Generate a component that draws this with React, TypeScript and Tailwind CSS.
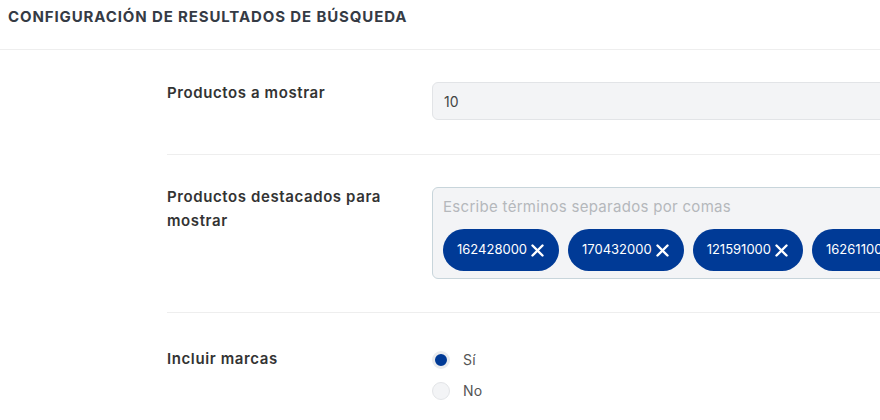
const tags = ["162428000", "170432000", "121591000", "162611000"];

function Radio({ checked, label }: { checked: boolean; label: string }) {
  return (
    <label className="flex items-center gap-[13px] h-[31px]">
      {checked ? (
        <span className="w-[18px] h-[18px] rounded-full border-[3px] border-[#e9ebee] bg-[#003a96]" />
      ) : (
        <span className="w-[18px] h-[18px] rounded-full border border-[#e3e5e8] bg-[#f3f4f6]" />
      )}
      <span className="text-[14px] text-[#555] tracking-[0.3px]">{label}</span>
    </label>
  );
}

function CloseIcon() {
  return (
    <svg width="13" height="13" viewBox="0 0 13 13" fill="none" stroke="white" strokeWidth="2.4" strokeLinecap="round">
      <path d="M1.5 1.5l10 10M11.5 1.5l-10 10" />
    </svg>
  );
}

export default function App() {
  return (
    <div className="w-[880px] h-[420px] overflow-hidden bg-white text-[#333] font-['Inter',sans-serif]">
      <div className="h-[50px] pt-[6px] pl-2 border-b border-[#eeeeee]">
        <h1 className="text-[15px] font-bold uppercase tracking-[0.88px] text-[#353b45]">
          Configuración de resultados de búsqueda
        </h1>
      </div>

      <div className="pl-[167px]">
        <div className="flex pt-[32px] pb-[34px] border-b border-[#eeeeee]">
          <div className="w-[265px] shrink-0 text-[15px] font-semibold leading-6 tracking-[0.6px] -mt-px">
            Productos a mostrar
          </div>
          <div className="w-[520px] shrink-0 h-[38px] rounded-md bg-[#f3f4f6] border border-[#e2e4e7] flex items-center pl-[11px] text-[14px] text-[#444]">
            10
          </div>
        </div>

        <div className="flex pt-[32px] pb-[33px] border-b border-[#eeeeee]">
          <div className="w-[265px] shrink-0 pr-10 text-[15px] font-semibold leading-6 tracking-[0.6px] -mt-[2px]">
            Productos destacados para mostrar
          </div>
          <div className="w-[520px] shrink-0 h-[92px] rounded-md bg-[#f3f4f6] border border-[#c8d5db] pl-[10px] pt-[9px] overflow-hidden">
            <div className="text-[15px] leading-5 text-[#b5b8bc] tracking-[0.3px]">
              Escribe términos separados por comas
            </div>
            <div className="flex gap-[9px] mt-[12px]">
              {tags.map((t) => (
                <span
                  key={t}
                  className="shrink-0 h-[42px] rounded-full bg-[#003a96] text-white flex items-center gap-[4px] pl-[14px] pr-[15px] text-[13px]"
                >
                  {t}
                  <CloseIcon />
                </span>
              ))}
            </div>
          </div>
        </div>

        <div className="flex pt-[34px]">
          <div className="w-[265px] shrink-0 text-[15px] font-semibold leading-6 tracking-[0.6px]">
            Incluir marcas
          </div>
          <div className="flex flex-col -mt-[3px]">
            <Radio checked label="Sí" />
            <Radio checked={false} label="No" />
          </div>
        </div>
      </div>
    </div>
  );
}
